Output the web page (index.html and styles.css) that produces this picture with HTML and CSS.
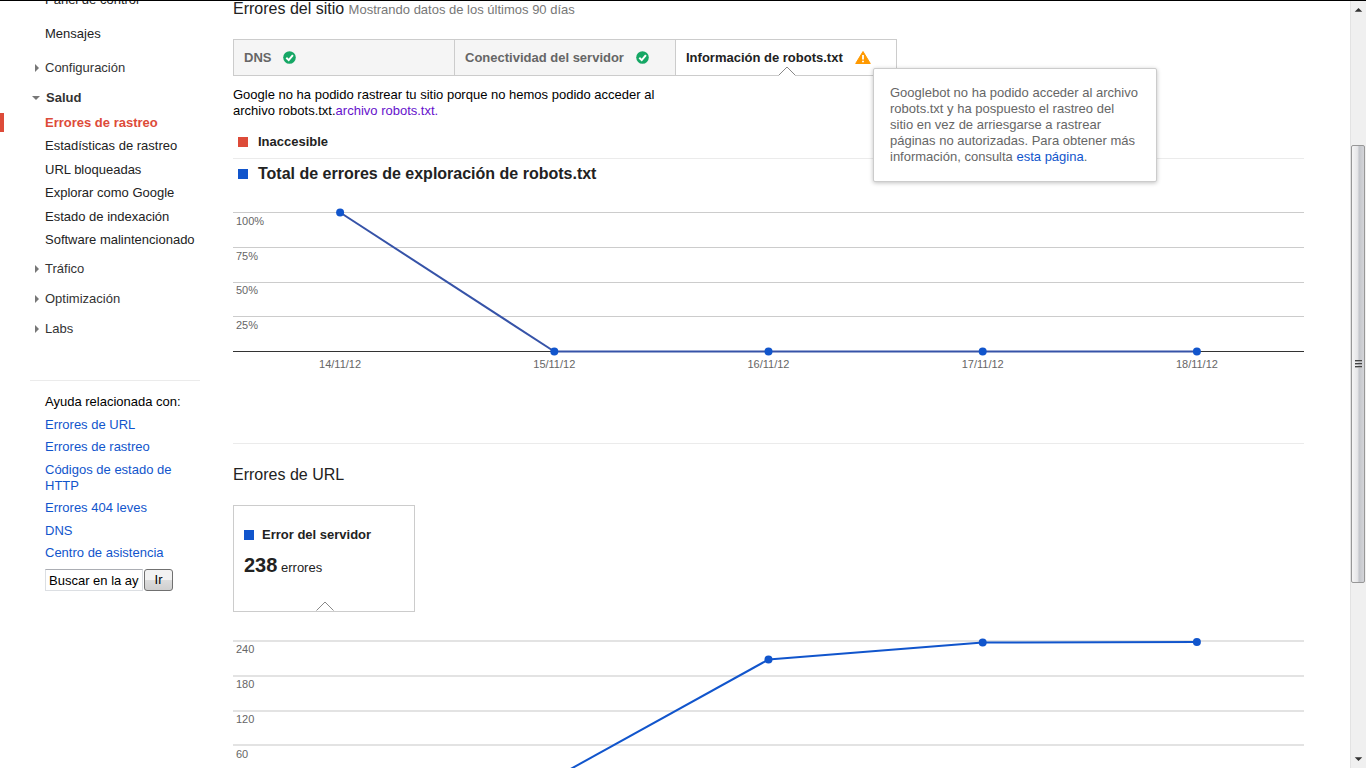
FILE: index.html
```html
<!DOCTYPE html>
<html lang="es">
<head>
<meta charset="utf-8">
<title>Errores de rastreo</title>
<link rel="stylesheet" href="styles.css">
</head>
<body>
<div class="page">
  <aside class="sidebar">
    <nav class="nav">
      <a class="nav-item tall" href="#">Panel de control</a>
      <a class="nav-item tall" href="#">Mensajes</a>
      <a class="nav-item tall group" href="#"><span class="arrow"></span>Configuración</a>
      <a class="nav-item open" href="#"><span class="arrow down"></span>Salud</a>
      <div class="subnav">
        <a class="selected" href="#">Errores de rastreo</a>
        <a href="#">Estadísticas de rastreo</a>
        <a href="#">URL bloqueadas</a>
        <a href="#">Explorar como Google</a>
        <a href="#">Estado de indexación</a>
        <a href="#">Software malintencionado</a>
      </div>
      <a class="nav-item group" href="#"><span class="arrow"></span>Tráfico</a>
      <a class="nav-item group" href="#"><span class="arrow"></span>Optimización</a>
      <a class="nav-item group" href="#"><span class="arrow"></span>Labs</a>
    </nav>
    <section class="help">
      <p>Ayuda relacionada con:</p>
      <div class="help-links">
        <a href="#">Errores de URL</a>
        <a href="#">Errores de rastreo</a>
        <a href="#">Códigos de estado de HTTP</a>
        <a href="#">Errores 404 leves</a>
        <a href="#">DNS</a>
        <a href="#">Centro de asistencia</a>
      </div>
      <form class="search">
        <input type="text" aria-label="Buscar en la ayuda" value="Buscar en la ayuda">
        <button type="button">Ir</button>
      </form>
    </section>
  </aside>

  <main class="content">
    <h2 class="heading">Errores del sitio <small>Mostrando datos de los últimos 90 días</small></h2>
    <div class="tabs">
      <button class="tab" type="button">DNS
        <svg class="check" viewBox="0 0 13 13"><circle cx="6.500" cy="6.500" r="6.300" fill="#16a765"/><path d="M3.300 6.800l2.400 2.300 4.200-5" fill="none" stroke="#fff" stroke-width="2"/></svg>
      </button>
      <button class="tab" type="button">Conectividad del servidor
        <svg class="check" viewBox="0 0 13 13"><circle cx="6.500" cy="6.500" r="6.300" fill="#16a765"/><path d="M3.300 6.800l2.400 2.300 4.200-5" fill="none" stroke="#fff" stroke-width="2"/></svg>
      </button>
      <div class="tab-wrap">
        <button class="tab active" type="button">Información de robots.txt
          <svg class="warn" viewBox="0 0 16 13"><path d="M8 .5L15.300 12.500H.7z" fill="#f90" stroke="#f90" stroke-linejoin="round"/><path d="M8 4v4.500M8 9.700v1.600" stroke="#fff" stroke-width="1.800"/></svg>
        </button>
        <svg class="notch" viewBox="0 0 18 10"><path d="M0 9.500L9 .7l9 8.800V10H0z" fill="#fff"/><path d="M.5 9.500L9 1l8.500 8.500" fill="none" stroke="#888"/></svg>
        <div class="tooltip" role="tooltip">Googlebot no ha podido acceder al archivo robots.txt y ha pospuesto el rastreo del sitio en vez de arriesgarse a rastrear páginas no autorizadas. Para obtener más información, consulta <a href="#">esta página</a>.</div>
      </div>
    </div>
    <p class="message">Google no ha podido rastrear tu sitio porque no hemos podido acceder al archivo robots.txt.<a href="#">archivo robots.txt.</a></p>
    <div class="legend"><span class="swatch red"></span>Inaccesible</div>
    <h3 class="legend total"><span class="swatch"></span>Total de errores de exploración de robots.txt</h3>

    <svg class="chart chart-robots" role="img" aria-label="Total de errores de exploración de robots.txt">
      <g class="grid">
        <line x1="0" x2="100%" y1="23.500" y2="23.500"/><line x1="0" x2="100%" y1="58.500" y2="58.500"/>
        <line x1="0" x2="100%" y1="93.500" y2="93.500"/><line x1="0" x2="100%" y1="127.500" y2="127.500"/>
        <line class="axis" x1="0" x2="100%" y1="162.500" y2="162.500"/>
      </g>
      <text x="3" y="36">100%</text><text x="3" y="71">75%</text><text x="3" y="105">50%</text><text x="3" y="140">25%</text>
      <g class="series mixed">
        <line x1="10%" y1="23.500" x2="30%" y2="162.500"/><line x1="30%" y1="162.500" x2="90%" y2="162.500"/>
      </g>
      <g class="dots">
        <circle cx="10%" cy="23.500" r="4"/><circle cx="30%" cy="162.500" r="4"/><circle cx="50%" cy="162.500" r="4"/><circle cx="70%" cy="162.500" r="4"/><circle cx="90%" cy="162.500" r="4"/>
      </g>
      <g class="dates">
        <text x="10%" y="179">14/11/12</text><text x="30%" y="179">15/11/12</text><text x="50%" y="179">16/11/12</text><text x="70%" y="179">17/11/12</text><text x="90%" y="179">18/11/12</text>
      </g>
    </svg>

    <section class="url-errors">
      <h2 class="heading">Errores de URL</h2>
      <div class="card">
        <h3><span class="swatch"></span>Error del servidor</h3>
        <p><strong>238</strong> errores</p>
        <svg class="notch" viewBox="0 0 18 10"><path d="M0 9.500L9 .7l9 8.800V10H0z" fill="#fff"/><path d="M.5 9.500L9 1l8.500 8.500" fill="none" stroke="#888"/></svg>
      </div>
      <svg class="chart chart-url" role="img" aria-label="Error del servidor">
        <g class="grid light">
          <line x1="0" x2="100%" y1="29" y2="29"/><line x1="0" x2="100%" y1="64" y2="64"/>
          <line x1="0" x2="100%" y1="99" y2="99"/><line x1="0" x2="100%" y1="133" y2="133"/>
        </g>
        <text x="3" y="41">240</text><text x="3" y="76">180</text><text x="3" y="111">120</text><text x="3" y="146">60</text>
        <g class="series">
          <line x1="30%" y1="166" x2="50%" y2="47.500"/><line x1="50%" y1="47.500" x2="70%" y2="30.500"/><line x1="70%" y1="30.500" x2="90%" y2="30"/>
        </g>
        <g class="dots"><circle cx="50%" cy="47.500" r="4"/><circle cx="70%" cy="30.500" r="4"/><circle cx="90%" cy="30" r="4"/></g>
      </svg>
    </section>
  </main>

  <div class="scrollbar" aria-hidden="true">
    <svg class="scroll-arrow" viewBox="0 0 16 18"><path d="M8 8l4 4H4z" fill="#333"/></svg>
    <div class="track"><div class="thumb"><span class="grip"></span></div></div>
    <svg class="scroll-arrow" viewBox="0 0 16 18"><path d="M4 7h8l-4 4z" fill="#333"/></svg>
  </div>
</div>
</body>
</html>
```
FILE: styles.css
```css
* { box-sizing: border-box; }

body {
  margin: 0;
  background: #fff;
  color: #222;
  font: 13px/16px "Liberation Sans", Arial, sans-serif;
}

h2, h3, p { margin: 0; }
a { color: #15c; text-decoration: none; }
button { font: inherit; }

.page {
  display: flex;
  height: 100vh;
  overflow: hidden;
  position: relative;
}

.page::before {
  content: "";
  position: absolute;
  inset: 0 0 auto;
  height: 1px;
  background: #000;
  z-index: 5;
}

/* Sidebar */
.sidebar { flex: 0 0 200px; min-width: 0; }

.nav {
  display: flex;
  flex-direction: column;
  margin-top: -17px;
}

.nav-item {
  display: flex;
  align-items: center;
  height: 30px;
  padding-left: 45px;
  color: #222;
}

.nav-item.tall { height: 34px; }

.nav-item.group,
.nav-item.open {
  padding-left: 32px;
  color: #333;
}

.nav-item.open {
  height: 26px;
  font-weight: bold;
}

.arrow {
  width: 13px;
  display: flex;
  padding-left: 3px;
}

.arrow::before {
  content: "";
  border: 4px solid transparent;
  border-left: 4px solid #777;
  border-right: 0;
}

.arrow.down { padding-left: 0; width: 14px; }

.arrow.down::before {
  border: 4px solid transparent;
  border-top: 4px solid #777;
  border-bottom: 0;
}

.subnav {
  display: grid;
  grid-template-rows: repeat(6, 1fr);
  height: 141px;
  margin-bottom: 2px;
}

.subnav a {
  display: flex;
  align-items: center;
  padding-left: 45px;
  color: #222;
  white-space: nowrap;
}

.subnav .selected {
  position: relative;
  color: #dd4b39;
  font-weight: bold;
}

.subnav .selected::before {
  content: "";
  position: absolute;
  left: 0;
  top: 2px;
  width: 4px;
  height: 19px;
  background: #dd4b39;
}

.help {
  margin: 36px 0 0 30px;
  padding: 13px 22px 0 15px;
  border-top: 1px solid #ebebeb;
}

.help p { color: #000; white-space: nowrap; }

.help-links {
  display: flex;
  flex-direction: column;
  justify-content: space-between;
  height: 144px;
  margin: 7px 0 8px;
}

.search { display: flex; gap: 1px; }

.search input {
  width: 98px;
  height: 22px;
  padding: 0 3px;
  border: 1px solid #dcdfe3;
  border-top-color: #abadb3;
  font: inherit;
  color: #000;
}

.search button {
  width: 29px;
  height: 22px;
  padding: 0;
  border: 1px solid #707070;
  border-radius: 3px;
  background: linear-gradient(#f2f2f2 50%, #ddd 50%, #cfcfcf);
  color: #000;
}

/* Main column */
.content {
  flex: 1;
  min-width: 0;
  margin: 0 46px 0 33px;
}

.heading {
  font-size: 16px;
  line-height: 18px;
  font-weight: normal;
}

.heading small { font-size: 13px; color: #777; }

.tabs { display: flex; margin-top: 20px; }

.tab {
  display: flex;
  align-items: center;
  gap: 12px;
  width: 222px;
  height: 37px;
  margin-right: -1px;
  padding: 0 10px;
  border: 1px solid #ccc;
  background: #f5f5f5;
  color: #666;
  font-weight: bold;
  white-space: nowrap;
}

.tab.active { background: #fff; color: #222; }
.tab-wrap { position: relative; }
.check { width: 13px; height: 13px; }
.warn { width: 16px; height: 13px; }

.notch {
  position: absolute;
  bottom: 0;
  left: calc(50% - 8px);
  width: 18px;
  height: 10px;
}

.tooltip {
  position: absolute;
  left: 198px;
  top: 29px;
  z-index: 2;
  width: 284px;
  padding: 16px;
  border: 1px solid #ccc;
  border-radius: 2px;
  background: #fff;
  box-shadow: 0 1px 4px rgba(0, 0, 0, .25);
  color: #666;
}

.message {
  max-width: 440px;
  margin-top: 11px;
  color: #000;
}

.message a { color: #61c; }

.legend {
  display: flex;
  align-items: center;
  gap: 10px;
  height: 34px;
  margin-top: 6px;
  padding-left: 5px;
  border-bottom: 1px solid #ebebeb;
  font-size: 13px;
  font-weight: bold;
}

.legend.total {
  height: 30px;
  margin: 0;
  border: 0;
  font-size: 16px;
}

.swatch {
  width: 10px;
  height: 10px;
  background: #15c;
}

.swatch.red { background: #dd4b39; }

/* Charts */
.chart { display: block; width: 100%; }
.chart-robots { height: 254px; }
.chart-url { height: 190px; }
.chart text { font-size: 11px; fill: #666; }
.grid line { stroke: #ccc; }
.grid .axis { stroke: #333; }
.grid.light line { stroke: #e3e3e3; stroke-width: 2px; }
.series line { stroke: #15c; stroke-width: 2px; }
.series.mixed line { stroke: #3653a8; }
.dots circle { fill: #15c; }
.dates { text-anchor: middle; }

.url-errors { border-top: 1px solid #ebebeb; padding-top: 22px; }

.card {
  position: relative;
  width: 182px;
  height: 107px;
  margin-top: 21px;
  padding: 21px 10px;
  border: 1px solid #ccc;
}

.card h3 {
  display: flex;
  align-items: center;
  gap: 8px;
  font-size: 13px;
}

.card p { margin-top: 10px; line-height: 24px; }
.card strong { font-size: 20px; }

/* Window scrollbar */
.scrollbar {
  flex: 0 0 16px;
  display: flex;
  flex-direction: column;
  border-left: 1px solid #e3e3e3;
  background: #f0f0f0;
}

.scroll-arrow { width: 15px; height: 18px; }

.track {
  flex: 1;
  display: grid;
  grid-template-rows: 127fr 438fr 167fr;
}

.thumb {
  grid-row: 2;
  display: flex;
  align-items: center;
  justify-content: center;
  margin-right: 1px;
  border: 1px solid #979797;
  border-radius: 2px;
  background: linear-gradient(90deg, #f5f5f5, #e6e6e8 45%, #c4c6cb 60%, #d4d5d9);
}

.grip {
  width: 7px;
  height: 8px;
  background: repeating-linear-gradient(#444 0 1px, #aaa 1px 2px, transparent 2px 3px);
}
```
